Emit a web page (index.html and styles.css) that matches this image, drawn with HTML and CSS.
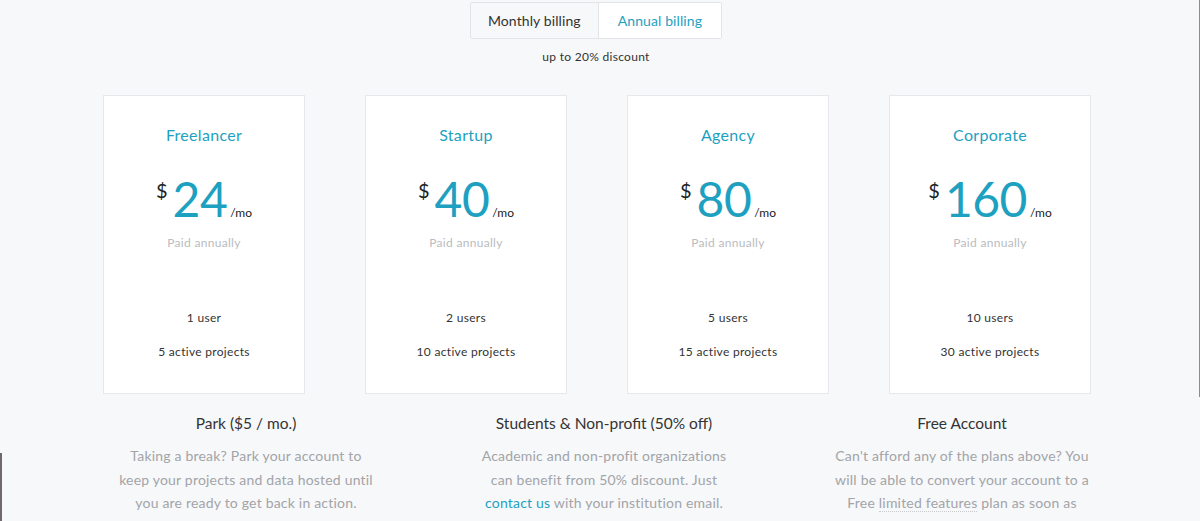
FILE: index.html
```html
<!DOCTYPE html>
<html>
<head>
<meta charset="utf-8">
<link rel="stylesheet" href="styles.css">
</head>
<body>
<div class="page">
  <div class="billing">
    <div class="toggle">
      <span class="opt">Monthly billing</span>
      <span class="opt active">Annual billing</span>
    </div>
    <div class="discount">up to 20% discount</div>
  </div>

  <div class="plans">
    <div class="card">
      <div class="name">Freelancer</div>
      <div class="price"><span class="cur">$</span><span class="amt">24</span><span class="per">/mo</span></div>
      <div class="paid">Paid annually</div>
      <div class="feat">1 user</div>
      <div class="feat">5 active projects</div>
    </div>
    <div class="card">
      <div class="name">Startup</div>
      <div class="price"><span class="cur">$</span><span class="amt">40</span><span class="per">/mo</span></div>
      <div class="paid">Paid annually</div>
      <div class="feat">2 users</div>
      <div class="feat">10 active projects</div>
    </div>
    <div class="card">
      <div class="name">Agency</div>
      <div class="price"><span class="cur">$</span><span class="amt">80</span><span class="per">/mo</span></div>
      <div class="paid">Paid annually</div>
      <div class="feat">5 users</div>
      <div class="feat">15 active projects</div>
    </div>
    <div class="card">
      <div class="name">Corporate</div>
      <div class="price"><span class="cur">$</span><span class="amt">160</span><span class="per">/mo</span></div>
      <div class="paid">Paid annually</div>
      <div class="feat">10 users</div>
      <div class="feat">30 active projects</div>
    </div>
  </div>

  <div class="extras">
    <div class="extra">
      <h3>Park ($5 / mo.)</h3>
      <p>Taking a break? Park your account to keep your projects and data hosted until you are ready to get back in action.</p>
    </div>
    <div class="extra">
      <h3>Students &amp; Non-profit (50% off)</h3>
      <p>Academic and non-profit organizations can benefit from 50% discount. Just <a href="#">contact us</a> with your institution email.</p>
    </div>
    <div class="extra">
      <h3>Free Account</h3>
      <p>Can't afford any of the plans above? You will be able to convert your account to a Free <span class="dotted">limited features</span> plan as soon as your subscription ends.</p>
    </div>
  </div>
</div>
</body>
</html>
```
FILE: styles.css
```css
html, body {
  margin: 0;
  padding: 0;
  background: #f7f8fa;
  height: 100%;
  overflow: hidden;
}
body {
  font-family: Lato, "Open Sans", "Liberation Sans", sans-serif;
  color: #333;
  letter-spacing: 0.3px;
  position: relative;
}
body::before {
  content: "";
  position: absolute;
  right: 0;
  top: 0;
  width: 1px;
  height: 397px;
  background: #8a8c90;
}
body::after {
  content: "";
  position: absolute;
  left: 0;
  top: 453px;
  width: 2px;
  bottom: 0;
  background: #6e6a6a;
}
.page {
  width: 988px;
  margin-left: 103px;
  padding-top: 2px;
}
.billing {
  display: flex;
  flex-direction: column;
  align-items: center;
}
.toggle {
  display: flex;
  border: 1px solid #e2e4e8;
  border-radius: 2px;
  margin-left: -2px;
}
.opt {
  display: block;
  height: 35px;
  line-height: 35px;
  font-size: 14px;
  letter-spacing: 0.1px;
  padding: 0 17px;
  color: #333;
  background: #f7f8fa;
}
.opt.active {
  background: #fff;
  color: #1ea1c1;
  border-left: 1px solid #e2e4e8;
  padding: 0 19px;
}
.discount {
  font-size: 12px;
  margin-top: 10px;
  margin-left: -2px;
}
.plans {
  display: grid;
  grid-template-columns: repeat(4, 202px);
  column-gap: 60px;
  margin-top: 31px;
}
.card {
  background: #fff;
  border: 1px solid #e6e8ec;
  height: 299px;
  box-sizing: border-box;
  display: flex;
  flex-direction: column;
  align-items: center;
}
.name {
  color: #1ea1c1;
  font-size: 16px;
  margin-top: 29px;
  line-height: 20px;
}
.price {
  display: flex;
  align-items: baseline;
  margin-top: 26px;
  height: 60px;
  letter-spacing: 0;
}
.cur {
  font-size: 20px;
  align-self: flex-start;
  margin-top: 7px;
  margin-right: 5px;
  color: #222;
}
.amt {
  font-size: 48px;
  color: #1ea1c1;
  line-height: 56px;
  letter-spacing: -0.5px;
}
.per {
  font-size: 12px;
  margin-left: 3px;
  color: #222;
}
.paid {
  font-size: 12px;
  color: #b9bcc0;
  margin-top: 4px;
  margin-bottom: 60px;
}
.feat {
  font-size: 12px;
  color: #333;
  line-height: 16px;
  margin-bottom: 18px;
}
.extras {
  display: grid;
  grid-template-columns: repeat(3, 286px);
  column-gap: 72px;
  margin-top: 18px;
}
.extra {
  text-align: center;
  padding: 0 14px;
}
.extra h3 {
  font-size: 15.5px;
  letter-spacing: 0;
  font-weight: normal;
  margin: 0 0 10px;
  color: #333;
  line-height: 22px;
}
.extra p {
  font-size: 14px;
  letter-spacing: 0.2px;
  line-height: 23.5px;
  color: #a2a4a8;
  margin: 0;
}
.extra a {
  color: #1ea1c1;
  text-decoration: none;
}
.dotted {
  border-bottom: 1px dotted #c8cacd;
}
```
